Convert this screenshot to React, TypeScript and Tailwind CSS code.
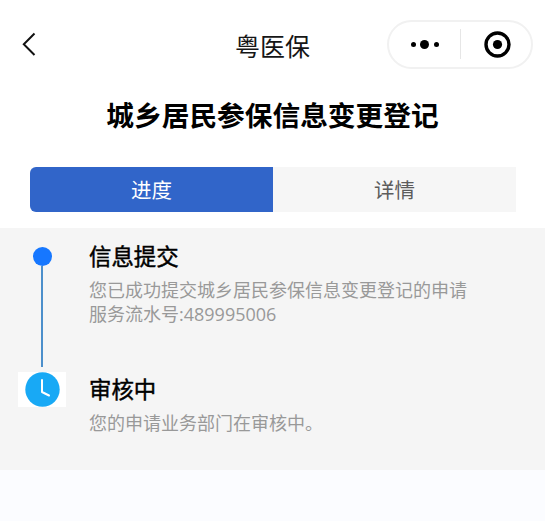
function NavBar() {
  return (
    <header className="flex h-[88px] items-center pr-3 pl-[21px]">
      <svg className="h-6 w-[152px] shrink-0" viewBox="0 0 152 24" fill="none" stroke="#111" strokeWidth="2">
        <path d="M13.5 1.5 2.8 12.3 13.5 23" />
      </svg>
      <h1 className="mt-[2px] ml-[62px] flex-1 text-[25px] leading-9 whitespace-nowrap text-[#161616]">粤医保</h1>
      <div className="flex h-[49px] w-[146px] items-center rounded-full border-2 border-[#f1f1f1]">
        <div className="flex w-[71px] items-center justify-center gap-[4.5px]">
          <span className="size-[5px] rounded-full bg-black" />
          <span className="size-[9px] rounded-full bg-black" />
          <span className="size-[5px] rounded-full bg-black" />
        </div>
        <span className="h-[30px] w-px bg-[#e6e6e6]" />
        <div className="flex flex-1 items-center justify-center pl-[3px]">
          <svg className="size-[27px]" viewBox="0 0 27 27">
            <circle cx="13.5" cy="13.5" r="11.5" fill="none" stroke="black" strokeWidth="3.4" />
            <circle cx="13.5" cy="13.5" r="4.6" fill="black" />
          </svg>
        </div>
      </div>
    </header>
  );
}

function Tabs() {
  return (
    <div className="mr-[29px] ml-[30px] flex h-[45px] text-[20.5px] leading-[45px]">
      <button className="w-[243px] rounded-l-[6px] bg-[#3165c9] text-center text-white">进度</button>
      <button className="flex-1 bg-[#f6f6f6] text-center text-[#5c5c5c]">详情</button>
    </div>
  );
}

function Step({ title, lines }: { title: string; lines: string[] }) {
  return (
    <div>
      <h3 className="text-[22.4px] leading-8 text-black [-webkit-text-stroke:0.45px_black]">{title}</h3>
      <div className="mt-[7px] font-['Open_Sans','Noto_Sans_CJK_SC',sans-serif] text-[18px] leading-[24px] whitespace-nowrap text-[#999]">
        {lines.map((line) => (
          <p key={line}>{line}</p>
        ))}
      </div>
    </div>
  );
}

export default function App() {
  return (
    <div className="flex h-[521px] w-[545px] flex-col overflow-hidden bg-white font-['Noto_Sans_CJK_SC',sans-serif]">
      <NavBar />
      <h2 className="mb-[27px] h-[52px] text-center text-[27.7px] leading-[52px] font-bold text-black">
        城乡居民参保信息变更登记
      </h2>
      <Tabs />
      <main className="mt-4 flex h-[242px] bg-[#f5f5f5] pl-[18px]">
        <div className="flex w-[48px] flex-col items-center pt-[19px]">
          <span className="size-[19px] rounded-full bg-[#1677ff]" />
          <span className="h-[101px] w-[2px] bg-[#4c8fcb]" />
          <div className="mt-[5px] flex h-[35px] w-[48px] items-center justify-center bg-white">
            <svg className="size-[35px]" viewBox="0 0 35 35">
              <circle cx="17.5" cy="17.5" r="17.2" fill="#18a9f5" />
              <path d="M17 8v12l7 3.5" fill="none" stroke="white" strokeWidth="2" strokeLinecap="round" strokeLinejoin="round" />
            </svg>
          </div>
        </div>
        <div className="flex flex-col gap-[46px] pt-[11px] pl-[23px]">
          <Step title="信息提交" lines={["您已成功提交城乡居民参保信息变更登记的申请", "服务流水号:489995006"]} />
          <Step title="审核中" lines={["您的申请业务部门在审核中。"]} />
        </div>
      </main>
      <div className="flex-1 bg-[#fbfcff]" />
    </div>
  );
}
